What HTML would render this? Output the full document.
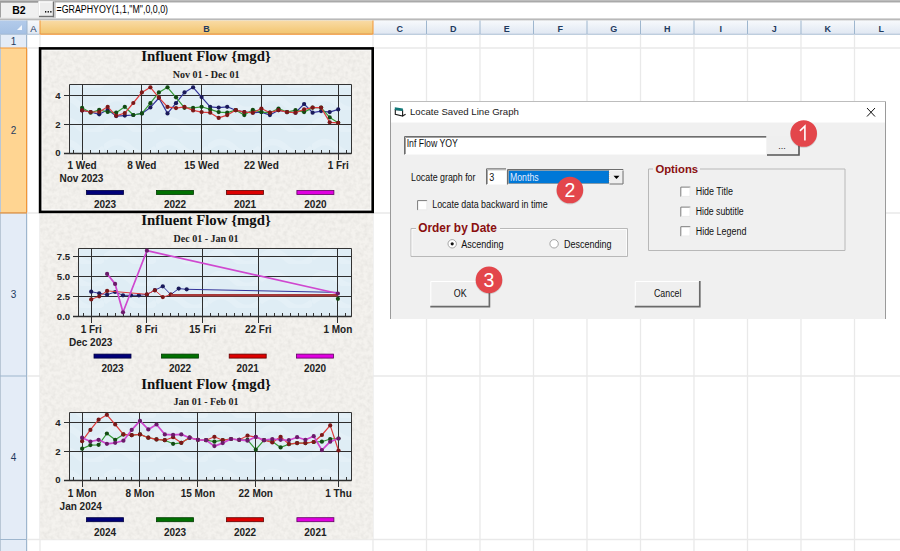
<!DOCTYPE html><html><head><meta charset="utf-8"><style>html,body{margin:0;padding:0;background:#fff;overflow:hidden}svg{display:block}</style></head><body>
<svg width="900" height="551" viewBox="0 0 900 551">
<defs>
<linearGradient id="hdr" x1="0" y1="0" x2="0" y2="1"><stop offset="0" stop-color="#f7f9fc"/><stop offset="1" stop-color="#dfe7f2"/></linearGradient>
<linearGradient id="hdrsel" x1="0" y1="0" x2="0" y2="1"><stop offset="0" stop-color="#f9dba6"/><stop offset="1" stop-color="#f2c46c"/></linearGradient>
<linearGradient id="corner" x1="0" y1="0" x2="0" y2="1"><stop offset="0" stop-color="#b3cbea"/><stop offset="1" stop-color="#a4c0e4"/></linearGradient>
<filter id="paper" x="0" y="0" width="100%" height="100%"><feTurbulence type="fractalNoise" baseFrequency="0.25" numOctaves="2" seed="3" result="n"/><feColorMatrix type="matrix" values="0 0 0 0 0.45  0 0 0 0 0.44  0 0 0 0 0.42  0 0 0 -1.6 1.05"/><feComposite in2="SourceGraphic" operator="in"/></filter>
<pattern id="wave" x="0" y="0" width="52" height="22" patternUnits="userSpaceOnUse"><path d="M0 16 Q13 4 26 16 T52 16" fill="none" stroke="#ffffff" stroke-width="6" opacity="0.16"/></pattern>
</defs>
<rect x="0" y="0" width="900" height="20.5" fill="#e9e9e9"/>
<rect x="0" y="0" width="900" height="1.5" fill="#bdbdbd"/>
<rect x="0" y="1.5" width="38" height="16" fill="#f0f0f0"/>
<rect x="0" y="1.2" width="38" height="1.4" fill="#8a8a8a"/>
<rect x="0" y="1.5" width="1" height="16" fill="#a0a0a0"/>
<text x="19" y="13.5" font-family='"Liberation Sans", sans-serif' font-size="10.5" font-weight="bold" text-anchor="middle" fill="#000">B2</text>
<rect x="39" y="1.5" width="15" height="15.5" fill="#ededed"/>
<rect x="39" y="1.5" width="14" height="1" fill="#fff"/>
<rect x="39" y="1.5" width="1" height="15" fill="#fff"/>
<rect x="39" y="15.8" width="15" height="1.4" fill="#6f6f6f"/>
<rect x="52.8" y="1.5" width="1.4" height="15.7" fill="#6f6f6f"/>
<rect x="45" y="11" width="1.3" height="1.6" fill="#111"/><rect x="47.6" y="11" width="1.3" height="1.6" fill="#111"/><rect x="50.2" y="11" width="1.3" height="1.6" fill="#111"/>
<rect x="54.5" y="1.5" width="846" height="16.5" fill="#fff"/>
<rect x="54.5" y="1.2" width="846" height="1.2" fill="#9a9a9a"/>
<rect x="54.5" y="1.5" width="1" height="16.5" fill="#a9a9a9"/>
<text x="56.5" y="12.6" font-family='"Liberation Sans", sans-serif' font-size="10" textLength="111.5" lengthAdjust="spacingAndGlyphs" fill="#000">=GRAPHYOY(1,1,"M",0,0,0)</text>
<rect x="0" y="18" width="900" height="1.3" fill="#d6d6d6"/>
<rect x="0" y="19.3" width="900" height="1.2" fill="#a7a7a7"/>
<rect x="0" y="20.5" width="900" height="14" fill="url(#hdr)"/>
<rect x="0" y="20.5" width="27" height="14" fill="url(#corner)"/>
<path d="M22 30 L22 25 L17 30 Z" fill="#f4f7fb"/>
<rect x="40" y="20.5" width="333" height="14" fill="url(#hdrsel)"/>
<rect x="0" y="33.8" width="900" height="1" fill="#9eb6ce"/>
<rect x="40" y="33.6" width="333" height="1.4" fill="#f29536"/>
<rect x="26.5" y="20.5" width="1" height="14" fill="#9eb6ce"/>
<rect x="39.5" y="20.5" width="1" height="14" fill="#f29536"/>
<rect x="372.5" y="20.5" width="1" height="14" fill="#f29536"/>
<rect x="426.0" y="20.5" width="1" height="14" fill="#9eb6ce"/>
<rect x="479.5" y="20.5" width="1" height="14" fill="#9eb6ce"/>
<rect x="533.0" y="20.5" width="1" height="14" fill="#9eb6ce"/>
<rect x="586.5" y="20.5" width="1" height="14" fill="#9eb6ce"/>
<rect x="640.0" y="20.5" width="1" height="14" fill="#9eb6ce"/>
<rect x="693.5" y="20.5" width="1" height="14" fill="#9eb6ce"/>
<rect x="747.0" y="20.5" width="1" height="14" fill="#9eb6ce"/>
<rect x="800.5" y="20.5" width="1" height="14" fill="#9eb6ce"/>
<rect x="854.0" y="20.5" width="1" height="14" fill="#9eb6ce"/>
<text x="33.5" y="31.6" font-family='"Liberation Sans", sans-serif' font-size="9.6" font-weight="normal" text-anchor="middle" fill="#1f3a5f">A</text>
<text x="206.5" y="31.6" font-family='"Liberation Sans", sans-serif' font-size="9" font-weight="bold" text-anchor="middle" fill="#1f3a5f">B</text>
<text x="399.75" y="31.6" font-family='"Liberation Sans", sans-serif' font-size="9" font-weight="bold" text-anchor="middle" fill="#1f3a5f">C</text>
<text x="453.25" y="31.6" font-family='"Liberation Sans", sans-serif' font-size="9" font-weight="bold" text-anchor="middle" fill="#1f3a5f">D</text>
<text x="506.75" y="31.6" font-family='"Liberation Sans", sans-serif' font-size="9" font-weight="bold" text-anchor="middle" fill="#1f3a5f">E</text>
<text x="560.25" y="31.6" font-family='"Liberation Sans", sans-serif' font-size="9" font-weight="bold" text-anchor="middle" fill="#1f3a5f">F</text>
<text x="613.75" y="31.6" font-family='"Liberation Sans", sans-serif' font-size="9" font-weight="bold" text-anchor="middle" fill="#1f3a5f">G</text>
<text x="667.25" y="31.6" font-family='"Liberation Sans", sans-serif' font-size="9" font-weight="bold" text-anchor="middle" fill="#1f3a5f">H</text>
<text x="720.75" y="31.6" font-family='"Liberation Sans", sans-serif' font-size="9" font-weight="bold" text-anchor="middle" fill="#1f3a5f">I</text>
<text x="774.25" y="31.6" font-family='"Liberation Sans", sans-serif' font-size="9" font-weight="bold" text-anchor="middle" fill="#1f3a5f">J</text>
<text x="827.75" y="31.6" font-family='"Liberation Sans", sans-serif' font-size="9" font-weight="bold" text-anchor="middle" fill="#1f3a5f">K</text>
<text x="881.25" y="31.6" font-family='"Liberation Sans", sans-serif' font-size="9" font-weight="bold" text-anchor="middle" fill="#1f3a5f">L</text>
<rect x="27" y="34.8" width="873" height="520" fill="#fff"/>
<rect x="0" y="34.8" width="27" height="520" fill="#e4ecf7"/>
<rect x="0" y="48" width="27" height="165" fill="#ffd592"/>
<rect x="26" y="34.8" width="1.2" height="520" fill="#9eb6ce"/>
<rect x="26" y="48" width="1.2" height="165" fill="#f29536"/>
<rect x="0" y="34.8" width="1" height="520" fill="#b9c7d6"/>
<rect x="0" y="47.5" width="27" height="1" fill="#f29536"/>
<rect x="0" y="212.5" width="27" height="1" fill="#9eb6ce"/>
<rect x="0" y="375.5" width="27" height="1" fill="#9eb6ce"/>
<rect x="0" y="539.0" width="27" height="1" fill="#9eb6ce"/>
<rect x="0" y="212.3" width="27" height="1.2" fill="#f29536"/>
<text x="13.5" y="45.0" font-family='"Liberation Sans", sans-serif' font-size="10" text-anchor="middle" fill="#1f3a5f">1</text>
<text x="13.5" y="134.1" font-family='"Liberation Sans", sans-serif' font-size="10" text-anchor="middle" fill="#1f3a5f">2</text>
<text x="13.5" y="298.1" font-family='"Liberation Sans", sans-serif' font-size="10" text-anchor="middle" fill="#1f3a5f">3</text>
<text x="13.5" y="461.35" font-family='"Liberation Sans", sans-serif' font-size="10" text-anchor="middle" fill="#1f3a5f">4</text>
<line x1="373" y1="34.8" x2="373" y2="551" stroke="#e9e9e9" stroke-width="1.3"/>
<line x1="426.5" y1="34.8" x2="426.5" y2="551" stroke="#e9e9e9" stroke-width="1.3"/>
<line x1="480" y1="34.8" x2="480" y2="551" stroke="#e9e9e9" stroke-width="1.3"/>
<line x1="533.5" y1="34.8" x2="533.5" y2="551" stroke="#e9e9e9" stroke-width="1.3"/>
<line x1="587" y1="34.8" x2="587" y2="551" stroke="#e9e9e9" stroke-width="1.3"/>
<line x1="640.5" y1="34.8" x2="640.5" y2="551" stroke="#e9e9e9" stroke-width="1.3"/>
<line x1="694" y1="34.8" x2="694" y2="551" stroke="#e9e9e9" stroke-width="1.3"/>
<line x1="747.5" y1="34.8" x2="747.5" y2="551" stroke="#e9e9e9" stroke-width="1.3"/>
<line x1="801" y1="34.8" x2="801" y2="551" stroke="#e9e9e9" stroke-width="1.3"/>
<line x1="854.5" y1="34.8" x2="854.5" y2="551" stroke="#e9e9e9" stroke-width="1.3"/>
<line x1="40" y1="34.8" x2="40" y2="551" stroke="#e9e9e9" stroke-width="1.3"/>
<line x1="27" y1="48" x2="900" y2="48" stroke="#e9e9e9" stroke-width="1.3"/>
<line x1="27" y1="213" x2="900" y2="213" stroke="#e9e9e9" stroke-width="1.3"/>
<line x1="27" y1="376" x2="900" y2="376" stroke="#e9e9e9" stroke-width="1.3"/>
<line x1="27" y1="539.5" x2="900" y2="539.5" stroke="#e9e9e9" stroke-width="1.3"/>
<rect x="40" y="48" width="333" height="165" fill="#f4f2ee"/>
<rect x="40" y="48" width="333" height="165" fill="#fff" filter="url(#paper)" opacity="0.22"/>
<text x="206.1" y="61.4" font-family='"Liberation Serif", serif' font-size="14.8" font-weight="bold" text-anchor="middle" textLength="129.5" lengthAdjust="spacing" fill="#111">Influent Flow {mgd}</text>
<text x="206.1" y="77.9" font-family='"Liberation Serif", serif' font-size="10" font-weight="bold" text-anchor="middle" fill="#222">Nov 01 - Dec 01</text>
<rect x="69.5" y="84.5" width="282.0" height="69.0" fill="#dfedf5"/>
<rect x="69.5" y="84.5" width="282.0" height="69.0" fill="url(#wave)"/>
<path d="M69.5 153.5 L69.5 84.5 L351.5 84.5 L351.5 153.5" fill="none" stroke="#333" stroke-width="1"/>
<line x1="64.0" y1="153.5" x2="351.5" y2="153.5" stroke="#2e2e2e" stroke-width="1"/>
<text x="60.699999999999996" y="156.4" font-family='"Liberation Sans", sans-serif' font-size="9.6" font-weight="bold" text-anchor="end" fill="#222">0</text>
<line x1="64.0" y1="124.5" x2="351.5" y2="124.5" stroke="#2e2e2e" stroke-width="1"/>
<text x="60.699999999999996" y="127.60000000000001" font-family='"Liberation Sans", sans-serif' font-size="9.6" font-weight="bold" text-anchor="end" fill="#222">2</text>
<line x1="64.0" y1="95.5" x2="351.5" y2="95.5" stroke="#2e2e2e" stroke-width="1"/>
<text x="60.699999999999996" y="98.80000000000001" font-family='"Liberation Sans", sans-serif' font-size="9.6" font-weight="bold" text-anchor="end" fill="#222">4</text>
<line x1="73.5" y1="150.0" x2="73.5" y2="153.5" stroke="#333" stroke-width="1"/>
<line x1="82.5" y1="150.0" x2="82.5" y2="153.5" stroke="#333" stroke-width="1"/>
<line x1="90.5" y1="150.0" x2="90.5" y2="153.5" stroke="#333" stroke-width="1"/>
<line x1="99.5" y1="150.0" x2="99.5" y2="153.5" stroke="#333" stroke-width="1"/>
<line x1="107.5" y1="150.0" x2="107.5" y2="153.5" stroke="#333" stroke-width="1"/>
<line x1="116.5" y1="150.0" x2="116.5" y2="153.5" stroke="#333" stroke-width="1"/>
<line x1="124.5" y1="150.0" x2="124.5" y2="153.5" stroke="#333" stroke-width="1"/>
<line x1="133.5" y1="150.0" x2="133.5" y2="153.5" stroke="#333" stroke-width="1"/>
<line x1="141.5" y1="150.0" x2="141.5" y2="153.5" stroke="#333" stroke-width="1"/>
<line x1="150.5" y1="150.0" x2="150.5" y2="153.5" stroke="#333" stroke-width="1"/>
<line x1="158.5" y1="150.0" x2="158.5" y2="153.5" stroke="#333" stroke-width="1"/>
<line x1="167.5" y1="150.0" x2="167.5" y2="153.5" stroke="#333" stroke-width="1"/>
<line x1="176.5" y1="150.0" x2="176.5" y2="153.5" stroke="#333" stroke-width="1"/>
<line x1="184.5" y1="150.0" x2="184.5" y2="153.5" stroke="#333" stroke-width="1"/>
<line x1="193.5" y1="150.0" x2="193.5" y2="153.5" stroke="#333" stroke-width="1"/>
<line x1="201.5" y1="150.0" x2="201.5" y2="153.5" stroke="#333" stroke-width="1"/>
<line x1="210.5" y1="150.0" x2="210.5" y2="153.5" stroke="#333" stroke-width="1"/>
<line x1="218.5" y1="150.0" x2="218.5" y2="153.5" stroke="#333" stroke-width="1"/>
<line x1="227.5" y1="150.0" x2="227.5" y2="153.5" stroke="#333" stroke-width="1"/>
<line x1="235.5" y1="150.0" x2="235.5" y2="153.5" stroke="#333" stroke-width="1"/>
<line x1="244.5" y1="150.0" x2="244.5" y2="153.5" stroke="#333" stroke-width="1"/>
<line x1="252.5" y1="150.0" x2="252.5" y2="153.5" stroke="#333" stroke-width="1"/>
<line x1="261.5" y1="150.0" x2="261.5" y2="153.5" stroke="#333" stroke-width="1"/>
<line x1="269.5" y1="150.0" x2="269.5" y2="153.5" stroke="#333" stroke-width="1"/>
<line x1="278.5" y1="150.0" x2="278.5" y2="153.5" stroke="#333" stroke-width="1"/>
<line x1="286.5" y1="150.0" x2="286.5" y2="153.5" stroke="#333" stroke-width="1"/>
<line x1="295.5" y1="150.0" x2="295.5" y2="153.5" stroke="#333" stroke-width="1"/>
<line x1="304.5" y1="150.0" x2="304.5" y2="153.5" stroke="#333" stroke-width="1"/>
<line x1="312.5" y1="150.0" x2="312.5" y2="153.5" stroke="#333" stroke-width="1"/>
<line x1="321.5" y1="150.0" x2="321.5" y2="153.5" stroke="#333" stroke-width="1"/>
<line x1="329.5" y1="150.0" x2="329.5" y2="153.5" stroke="#333" stroke-width="1"/>
<line x1="338.5" y1="150.0" x2="338.5" y2="153.5" stroke="#333" stroke-width="1"/>
<line x1="346.5" y1="150.0" x2="346.5" y2="153.5" stroke="#333" stroke-width="1"/>
<line x1="82.5" y1="84.5" x2="82.5" y2="160.0" stroke="#2e2e2e" stroke-width="1"/>
<text x="82.1" y="168.9" font-family='"Liberation Sans", sans-serif' font-size="10" font-weight="bold" text-anchor="middle" fill="#222">1 Wed</text>
<line x1="141.5" y1="84.5" x2="141.5" y2="160.0" stroke="#2e2e2e" stroke-width="1"/>
<text x="141.859" y="168.9" font-family='"Liberation Sans", sans-serif' font-size="10" font-weight="bold" text-anchor="middle" fill="#222">8 Wed</text>
<line x1="201.5" y1="84.5" x2="201.5" y2="160.0" stroke="#2e2e2e" stroke-width="1"/>
<text x="201.618" y="168.9" font-family='"Liberation Sans", sans-serif' font-size="10" font-weight="bold" text-anchor="middle" fill="#222">15 Wed</text>
<line x1="261.5" y1="84.5" x2="261.5" y2="160.0" stroke="#2e2e2e" stroke-width="1"/>
<text x="261.377" y="168.9" font-family='"Liberation Sans", sans-serif' font-size="10" font-weight="bold" text-anchor="middle" fill="#222">22 Wed</text>
<line x1="338.5" y1="84.5" x2="338.5" y2="160.0" stroke="#2e2e2e" stroke-width="1"/>
<text x="338.21000000000004" y="168.9" font-family='"Liberation Sans", sans-serif' font-size="10" font-weight="bold" text-anchor="middle" fill="#222">1 Fri</text>
<text x="59.5" y="182" font-family='"Liberation Sans", sans-serif' font-size="10" font-weight="bold" fill="#222">Nov 2023</text>
<polyline points="82.1,110.4 90.6,112.0 99.2,114.3 107.7,109.8 116.2,116.1 124.8,115.6 133.3,115.0 141.9,113.4 150.4,107.4 158.9,98.0 167.5,113.4 176.0,103.2 184.5,92.4 193.1,87.3 201.6,97.1 210.2,106.8 218.7,107.6 227.2,106.8 235.8,110.2 244.3,112.1 252.8,112.7 261.4,112.1 269.9,115.1 278.5,110.2 287.0,112.1 295.5,112.7 304.1,104.0 312.6,112.7 321.1,111.1 329.7,112.1 338.2,109.4" fill="none" stroke="#34349a" stroke-width="1.2" stroke-linejoin="round"/>
<circle cx="82.1" cy="110.4" r="2.1" fill="#1a1a5a"/>
<circle cx="90.6" cy="112.0" r="2.1" fill="#1a1a5a"/>
<circle cx="99.2" cy="114.3" r="2.1" fill="#1a1a5a"/>
<circle cx="107.7" cy="109.8" r="2.1" fill="#1a1a5a"/>
<circle cx="116.2" cy="116.1" r="2.1" fill="#1a1a5a"/>
<circle cx="124.8" cy="115.6" r="2.1" fill="#1a1a5a"/>
<circle cx="133.3" cy="115.0" r="2.1" fill="#1a1a5a"/>
<circle cx="141.9" cy="113.4" r="2.1" fill="#1a1a5a"/>
<circle cx="150.4" cy="107.4" r="2.1" fill="#1a1a5a"/>
<circle cx="158.9" cy="98.0" r="2.1" fill="#1a1a5a"/>
<circle cx="167.5" cy="113.4" r="2.1" fill="#1a1a5a"/>
<circle cx="176.0" cy="103.2" r="2.1" fill="#1a1a5a"/>
<circle cx="184.5" cy="92.4" r="2.1" fill="#1a1a5a"/>
<circle cx="193.1" cy="87.3" r="2.1" fill="#1a1a5a"/>
<circle cx="201.6" cy="97.1" r="2.1" fill="#1a1a5a"/>
<circle cx="210.2" cy="106.8" r="2.1" fill="#1a1a5a"/>
<circle cx="218.7" cy="107.6" r="2.1" fill="#1a1a5a"/>
<circle cx="227.2" cy="106.8" r="2.1" fill="#1a1a5a"/>
<circle cx="235.8" cy="110.2" r="2.1" fill="#1a1a5a"/>
<circle cx="244.3" cy="112.1" r="2.1" fill="#1a1a5a"/>
<circle cx="252.8" cy="112.7" r="2.1" fill="#1a1a5a"/>
<circle cx="261.4" cy="112.1" r="2.1" fill="#1a1a5a"/>
<circle cx="269.9" cy="115.1" r="2.1" fill="#1a1a5a"/>
<circle cx="278.5" cy="110.2" r="2.1" fill="#1a1a5a"/>
<circle cx="287.0" cy="112.1" r="2.1" fill="#1a1a5a"/>
<circle cx="295.5" cy="112.7" r="2.1" fill="#1a1a5a"/>
<circle cx="304.1" cy="104.0" r="2.1" fill="#1a1a5a"/>
<circle cx="312.6" cy="112.7" r="2.1" fill="#1a1a5a"/>
<circle cx="321.1" cy="111.1" r="2.1" fill="#1a1a5a"/>
<circle cx="329.7" cy="112.1" r="2.1" fill="#1a1a5a"/>
<circle cx="338.2" cy="109.4" r="2.1" fill="#1a1a5a"/>
<polyline points="82.1,107.8 90.6,112.7 99.2,109.9 107.7,112.0 116.2,112.7 124.8,106.8 133.3,115.0 141.9,113.4 150.4,103.2 158.9,92.4 167.5,87.3 176.0,97.3 184.5,107.8 193.1,107.8 201.6,106.8 210.2,109.4 218.7,112.1 227.2,112.7 235.8,110.2 244.3,115.1 252.8,109.8 261.4,112.1 269.9,112.7 278.5,108.5 287.0,112.1 295.5,110.2 304.1,112.1 312.6,107.6 321.1,107.6 329.7,117.4 338.2,122.8" fill="none" stroke="#349a34" stroke-width="1.2" stroke-linejoin="round"/>
<circle cx="82.1" cy="107.8" r="2.1" fill="#124a12"/>
<circle cx="90.6" cy="112.7" r="2.1" fill="#124a12"/>
<circle cx="99.2" cy="109.9" r="2.1" fill="#124a12"/>
<circle cx="107.7" cy="112.0" r="2.1" fill="#124a12"/>
<circle cx="116.2" cy="112.7" r="2.1" fill="#124a12"/>
<circle cx="124.8" cy="106.8" r="2.1" fill="#124a12"/>
<circle cx="133.3" cy="115.0" r="2.1" fill="#124a12"/>
<circle cx="141.9" cy="113.4" r="2.1" fill="#124a12"/>
<circle cx="150.4" cy="103.2" r="2.1" fill="#124a12"/>
<circle cx="158.9" cy="92.4" r="2.1" fill="#124a12"/>
<circle cx="167.5" cy="87.3" r="2.1" fill="#124a12"/>
<circle cx="176.0" cy="97.3" r="2.1" fill="#124a12"/>
<circle cx="184.5" cy="107.8" r="2.1" fill="#124a12"/>
<circle cx="193.1" cy="107.8" r="2.1" fill="#124a12"/>
<circle cx="201.6" cy="106.8" r="2.1" fill="#124a12"/>
<circle cx="210.2" cy="109.4" r="2.1" fill="#124a12"/>
<circle cx="218.7" cy="112.1" r="2.1" fill="#124a12"/>
<circle cx="227.2" cy="112.7" r="2.1" fill="#124a12"/>
<circle cx="235.8" cy="110.2" r="2.1" fill="#124a12"/>
<circle cx="244.3" cy="115.1" r="2.1" fill="#124a12"/>
<circle cx="252.8" cy="109.8" r="2.1" fill="#124a12"/>
<circle cx="261.4" cy="112.1" r="2.1" fill="#124a12"/>
<circle cx="269.9" cy="112.7" r="2.1" fill="#124a12"/>
<circle cx="278.5" cy="108.5" r="2.1" fill="#124a12"/>
<circle cx="287.0" cy="112.1" r="2.1" fill="#124a12"/>
<circle cx="295.5" cy="110.2" r="2.1" fill="#124a12"/>
<circle cx="304.1" cy="112.1" r="2.1" fill="#124a12"/>
<circle cx="312.6" cy="107.6" r="2.1" fill="#124a12"/>
<circle cx="321.1" cy="107.6" r="2.1" fill="#124a12"/>
<circle cx="329.7" cy="117.4" r="2.1" fill="#124a12"/>
<circle cx="338.2" cy="122.8" r="2.1" fill="#124a12"/>
<polyline points="82.1,110.4 90.6,112.0 99.2,112.0 107.7,106.8 116.2,115.8 124.8,113.1 133.3,103.0 141.9,92.4 150.4,87.3 158.9,97.6 167.5,106.9 176.0,108.1 184.5,106.9 193.1,110.4 201.6,112.1 210.2,112.7 218.7,117.9 227.2,115.1 235.8,110.2 244.3,112.1 252.8,112.7 261.4,108.5 269.9,112.7 278.5,110.2 287.0,112.1 295.5,112.7 304.1,109.4 312.6,107.6 321.1,107.6 329.7,122.3 338.2,122.8" fill="none" stroke="#dd3c3c" stroke-width="1.2" stroke-linejoin="round"/>
<circle cx="82.1" cy="110.4" r="2.1" fill="#7a1818"/>
<circle cx="90.6" cy="112.0" r="2.1" fill="#7a1818"/>
<circle cx="99.2" cy="112.0" r="2.1" fill="#7a1818"/>
<circle cx="107.7" cy="106.8" r="2.1" fill="#7a1818"/>
<circle cx="116.2" cy="115.8" r="2.1" fill="#7a1818"/>
<circle cx="124.8" cy="113.1" r="2.1" fill="#7a1818"/>
<circle cx="133.3" cy="103.0" r="2.1" fill="#7a1818"/>
<circle cx="141.9" cy="92.4" r="2.1" fill="#7a1818"/>
<circle cx="150.4" cy="87.3" r="2.1" fill="#7a1818"/>
<circle cx="158.9" cy="97.6" r="2.1" fill="#7a1818"/>
<circle cx="167.5" cy="106.9" r="2.1" fill="#7a1818"/>
<circle cx="176.0" cy="108.1" r="2.1" fill="#7a1818"/>
<circle cx="184.5" cy="106.9" r="2.1" fill="#7a1818"/>
<circle cx="193.1" cy="110.4" r="2.1" fill="#7a1818"/>
<circle cx="201.6" cy="112.1" r="2.1" fill="#7a1818"/>
<circle cx="210.2" cy="112.7" r="2.1" fill="#7a1818"/>
<circle cx="218.7" cy="117.9" r="2.1" fill="#7a1818"/>
<circle cx="227.2" cy="115.1" r="2.1" fill="#7a1818"/>
<circle cx="235.8" cy="110.2" r="2.1" fill="#7a1818"/>
<circle cx="244.3" cy="112.1" r="2.1" fill="#7a1818"/>
<circle cx="252.8" cy="112.7" r="2.1" fill="#7a1818"/>
<circle cx="261.4" cy="108.5" r="2.1" fill="#7a1818"/>
<circle cx="269.9" cy="112.7" r="2.1" fill="#7a1818"/>
<circle cx="278.5" cy="110.2" r="2.1" fill="#7a1818"/>
<circle cx="287.0" cy="112.1" r="2.1" fill="#7a1818"/>
<circle cx="295.5" cy="112.7" r="2.1" fill="#7a1818"/>
<circle cx="304.1" cy="109.4" r="2.1" fill="#7a1818"/>
<circle cx="312.6" cy="107.6" r="2.1" fill="#7a1818"/>
<circle cx="321.1" cy="107.6" r="2.1" fill="#7a1818"/>
<circle cx="329.7" cy="122.3" r="2.1" fill="#7a1818"/>
<circle cx="338.2" cy="122.8" r="2.1" fill="#7a1818"/>
<line x1="64.0" y1="153.5" x2="351.5" y2="153.5" stroke="#2e2e2e" stroke-width="1.3"/>
<rect x="86.5" y="190.5" width="37" height="4" fill="#000078" stroke="#000040" stroke-width="0.8"/>
<text x="105" y="208.4" font-family='"Liberation Sans", sans-serif' font-size="10" font-weight="bold" text-anchor="middle" fill="#222">2023</text>
<rect x="156.5" y="190.5" width="37" height="4" fill="#007000" stroke="#003a00" stroke-width="0.8"/>
<text x="175" y="208.4" font-family='"Liberation Sans", sans-serif' font-size="10" font-weight="bold" text-anchor="middle" fill="#222">2022</text>
<rect x="226.5" y="190.5" width="37" height="4" fill="#dd0000" stroke="#600000" stroke-width="0.8"/>
<text x="245" y="208.4" font-family='"Liberation Sans", sans-serif' font-size="10" font-weight="bold" text-anchor="middle" fill="#222">2021</text>
<rect x="296.9" y="190.5" width="37" height="4" fill="#e000e0" stroke="#600060" stroke-width="0.8"/>
<text x="315.4" y="208.4" font-family='"Liberation Sans", sans-serif' font-size="10" font-weight="bold" text-anchor="middle" fill="#222">2020</text>
<rect x="40" y="213" width="333" height="163" fill="#f4f2ee"/>
<rect x="40" y="213" width="333" height="163" fill="#fff" filter="url(#paper)" opacity="0.22"/>
<text x="206.1" y="224.6" font-family='"Liberation Serif", serif' font-size="14.8" font-weight="bold" text-anchor="middle" textLength="129.5" lengthAdjust="spacing" fill="#111">Influent Flow {mgd}</text>
<text x="206.1" y="241.6" font-family='"Liberation Serif", serif' font-size="10" font-weight="bold" text-anchor="middle" fill="#222">Dec 01 - Jan 01</text>
<rect x="78.5" y="248.5" width="273.0" height="68.0" fill="#dfedf5"/>
<rect x="78.5" y="248.5" width="273.0" height="68.0" fill="url(#wave)"/>
<path d="M78.5 316.5 L78.5 248.5 L351.5 248.5 L351.5 316.5" fill="none" stroke="#333" stroke-width="1"/>
<line x1="73.0" y1="316.5" x2="351.5" y2="316.5" stroke="#2e2e2e" stroke-width="1"/>
<text x="70.2" y="319.7" font-family='"Liberation Sans", sans-serif' font-size="9.6" font-weight="bold" text-anchor="end" fill="#222">0.0</text>
<line x1="73.0" y1="296.5" x2="351.5" y2="296.5" stroke="#2e2e2e" stroke-width="1"/>
<text x="70.2" y="299.8" font-family='"Liberation Sans", sans-serif' font-size="9.6" font-weight="bold" text-anchor="end" fill="#222">2.5</text>
<line x1="73.0" y1="276.5" x2="351.5" y2="276.5" stroke="#2e2e2e" stroke-width="1"/>
<text x="70.2" y="279.9" font-family='"Liberation Sans", sans-serif' font-size="9.6" font-weight="bold" text-anchor="end" fill="#222">5.0</text>
<line x1="73.0" y1="256.5" x2="351.5" y2="256.5" stroke="#2e2e2e" stroke-width="1"/>
<text x="70.2" y="260.0" font-family='"Liberation Sans", sans-serif' font-size="9.6" font-weight="bold" text-anchor="end" fill="#222">7.5</text>
<line x1="83.5" y1="313.0" x2="83.5" y2="316.5" stroke="#333" stroke-width="1"/>
<line x1="91.5" y1="313.0" x2="91.5" y2="316.5" stroke="#333" stroke-width="1"/>
<line x1="99.5" y1="313.0" x2="99.5" y2="316.5" stroke="#333" stroke-width="1"/>
<line x1="107.5" y1="313.0" x2="107.5" y2="316.5" stroke="#333" stroke-width="1"/>
<line x1="115.5" y1="313.0" x2="115.5" y2="316.5" stroke="#333" stroke-width="1"/>
<line x1="123.5" y1="313.0" x2="123.5" y2="316.5" stroke="#333" stroke-width="1"/>
<line x1="130.5" y1="313.0" x2="130.5" y2="316.5" stroke="#333" stroke-width="1"/>
<line x1="138.5" y1="313.0" x2="138.5" y2="316.5" stroke="#333" stroke-width="1"/>
<line x1="146.5" y1="313.0" x2="146.5" y2="316.5" stroke="#333" stroke-width="1"/>
<line x1="154.5" y1="313.0" x2="154.5" y2="316.5" stroke="#333" stroke-width="1"/>
<line x1="162.5" y1="313.0" x2="162.5" y2="316.5" stroke="#333" stroke-width="1"/>
<line x1="170.5" y1="313.0" x2="170.5" y2="316.5" stroke="#333" stroke-width="1"/>
<line x1="178.5" y1="313.0" x2="178.5" y2="316.5" stroke="#333" stroke-width="1"/>
<line x1="186.5" y1="313.0" x2="186.5" y2="316.5" stroke="#333" stroke-width="1"/>
<line x1="194.5" y1="313.0" x2="194.5" y2="316.5" stroke="#333" stroke-width="1"/>
<line x1="202.5" y1="313.0" x2="202.5" y2="316.5" stroke="#333" stroke-width="1"/>
<line x1="210.5" y1="313.0" x2="210.5" y2="316.5" stroke="#333" stroke-width="1"/>
<line x1="218.5" y1="313.0" x2="218.5" y2="316.5" stroke="#333" stroke-width="1"/>
<line x1="226.5" y1="313.0" x2="226.5" y2="316.5" stroke="#333" stroke-width="1"/>
<line x1="234.5" y1="313.0" x2="234.5" y2="316.5" stroke="#333" stroke-width="1"/>
<line x1="242.5" y1="313.0" x2="242.5" y2="316.5" stroke="#333" stroke-width="1"/>
<line x1="250.5" y1="313.0" x2="250.5" y2="316.5" stroke="#333" stroke-width="1"/>
<line x1="258.5" y1="313.0" x2="258.5" y2="316.5" stroke="#333" stroke-width="1"/>
<line x1="266.5" y1="313.0" x2="266.5" y2="316.5" stroke="#333" stroke-width="1"/>
<line x1="274.5" y1="313.0" x2="274.5" y2="316.5" stroke="#333" stroke-width="1"/>
<line x1="282.5" y1="313.0" x2="282.5" y2="316.5" stroke="#333" stroke-width="1"/>
<line x1="290.5" y1="313.0" x2="290.5" y2="316.5" stroke="#333" stroke-width="1"/>
<line x1="298.5" y1="313.0" x2="298.5" y2="316.5" stroke="#333" stroke-width="1"/>
<line x1="306.5" y1="313.0" x2="306.5" y2="316.5" stroke="#333" stroke-width="1"/>
<line x1="313.5" y1="313.0" x2="313.5" y2="316.5" stroke="#333" stroke-width="1"/>
<line x1="321.5" y1="313.0" x2="321.5" y2="316.5" stroke="#333" stroke-width="1"/>
<line x1="329.5" y1="313.0" x2="329.5" y2="316.5" stroke="#333" stroke-width="1"/>
<line x1="337.5" y1="313.0" x2="337.5" y2="316.5" stroke="#333" stroke-width="1"/>
<line x1="345.5" y1="313.0" x2="345.5" y2="316.5" stroke="#333" stroke-width="1"/>
<line x1="91.5" y1="248.5" x2="91.5" y2="323.0" stroke="#2e2e2e" stroke-width="1"/>
<text x="91.2" y="332.7" font-family='"Liberation Sans", sans-serif' font-size="10" font-weight="bold" text-anchor="middle" fill="#222">1 Fri</text>
<line x1="146.5" y1="248.5" x2="146.5" y2="323.0" stroke="#2e2e2e" stroke-width="1"/>
<text x="146.899" y="332.7" font-family='"Liberation Sans", sans-serif' font-size="10" font-weight="bold" text-anchor="middle" fill="#222">8 Fri</text>
<line x1="202.5" y1="248.5" x2="202.5" y2="323.0" stroke="#2e2e2e" stroke-width="1"/>
<text x="202.598" y="332.7" font-family='"Liberation Sans", sans-serif' font-size="10" font-weight="bold" text-anchor="middle" fill="#222">15 Fri</text>
<line x1="258.5" y1="248.5" x2="258.5" y2="323.0" stroke="#2e2e2e" stroke-width="1"/>
<text x="258.297" y="332.7" font-family='"Liberation Sans", sans-serif' font-size="10" font-weight="bold" text-anchor="middle" fill="#222">22 Fri</text>
<line x1="337.5" y1="248.5" x2="337.5" y2="323.0" stroke="#2e2e2e" stroke-width="1"/>
<text x="337.867" y="332.7" font-family='"Liberation Sans", sans-serif' font-size="10" font-weight="bold" text-anchor="middle" fill="#222">1 Mon</text>
<text x="69" y="345.6" font-family='"Liberation Sans", sans-serif' font-size="10" font-weight="bold" fill="#222">Dec 2023</text>
<polyline points="91.2,291.7 99.2,293.3 107.1,294.7 115.1,292.0 123.0,295.3 131.0,295.3 138.9,295.3 146.9,294.5 154.9,290.2 162.8,286.3 170.8,294.6 178.7,288.6 186.7,289.3 337.9,292.4" fill="none" stroke="#34349a" stroke-width="1" stroke-linejoin="round"/>
<circle cx="91.2" cy="291.7" r="2.1" fill="#1a1a5a"/>
<circle cx="99.2" cy="293.3" r="2.1" fill="#1a1a5a"/>
<circle cx="107.1" cy="294.7" r="2.1" fill="#1a1a5a"/>
<circle cx="115.1" cy="292.0" r="2.1" fill="#1a1a5a"/>
<circle cx="123.0" cy="295.3" r="2.1" fill="#1a1a5a"/>
<circle cx="131.0" cy="295.3" r="2.1" fill="#1a1a5a"/>
<circle cx="138.9" cy="295.3" r="2.1" fill="#1a1a5a"/>
<circle cx="146.9" cy="294.5" r="2.1" fill="#1a1a5a"/>
<circle cx="154.9" cy="290.2" r="2.1" fill="#1a1a5a"/>
<circle cx="162.8" cy="286.3" r="2.1" fill="#1a1a5a"/>
<circle cx="170.8" cy="294.6" r="2.1" fill="#1a1a5a"/>
<circle cx="178.7" cy="288.6" r="2.1" fill="#1a1a5a"/>
<circle cx="186.7" cy="289.3" r="2.1" fill="#1a1a5a"/>
<polyline points="337.9,298.8" fill="none" stroke="#349a34" stroke-width="1" stroke-linejoin="round"/>
<circle cx="337.9" cy="298.8" r="2.1" fill="#124a12"/>
<polyline points="91.2,299.4 99.2,296.3 107.1,290.9 146.9,294.3 154.9,290.3 162.8,297.1 170.8,294.6 337.9,295.2" fill="none" stroke="#dd3c3c" stroke-width="1" stroke-linejoin="round"/>
<circle cx="91.2" cy="299.4" r="2.1" fill="#7a1818"/>
<circle cx="99.2" cy="296.3" r="2.1" fill="#7a1818"/>
<circle cx="107.1" cy="290.9" r="2.1" fill="#7a1818"/>
<circle cx="146.9" cy="294.3" r="2.1" fill="#7a1818"/>
<circle cx="154.9" cy="290.3" r="2.1" fill="#7a1818"/>
<circle cx="162.8" cy="297.1" r="2.1" fill="#7a1818"/>
<circle cx="170.8" cy="294.6" r="2.1" fill="#7a1818"/>
<polyline points="170.8,295.2 337.9,295.2" fill="none" stroke="#a83a3a" stroke-width="2.4" stroke-linejoin="round"/>
<polyline points="107.1,273.9 115.1,283.9 123.0,312.3 146.9,250.7 337.9,293.5" fill="none" stroke="#cf48cf" stroke-width="1.7" stroke-linejoin="round"/>
<circle cx="107.1" cy="273.9" r="2.1" fill="#6a1a6a"/>
<circle cx="115.1" cy="283.9" r="2.1" fill="#6a1a6a"/>
<circle cx="123.0" cy="312.3" r="2.1" fill="#6a1a6a"/>
<circle cx="146.9" cy="250.7" r="2.1" fill="#6a1a6a"/>
<circle cx="337.9" cy="293.5" r="2.1" fill="#6a1a6a"/>
<line x1="73.0" y1="316.5" x2="351.5" y2="316.5" stroke="#2e2e2e" stroke-width="1.3"/>
<rect x="94.0" y="354.1" width="37" height="4" fill="#000078" stroke="#000040" stroke-width="0.8"/>
<text x="112.5" y="372.1" font-family='"Liberation Sans", sans-serif' font-size="10" font-weight="bold" text-anchor="middle" fill="#222">2023</text>
<rect x="161.5" y="354.1" width="37" height="4" fill="#007000" stroke="#003a00" stroke-width="0.8"/>
<text x="180" y="372.1" font-family='"Liberation Sans", sans-serif' font-size="10" font-weight="bold" text-anchor="middle" fill="#222">2022</text>
<rect x="229.2" y="354.1" width="37" height="4" fill="#dd0000" stroke="#600000" stroke-width="0.8"/>
<text x="247.7" y="372.1" font-family='"Liberation Sans", sans-serif' font-size="10" font-weight="bold" text-anchor="middle" fill="#222">2021</text>
<rect x="296.5" y="354.1" width="37" height="4" fill="#e000e0" stroke="#600060" stroke-width="0.8"/>
<text x="315" y="372.1" font-family='"Liberation Sans", sans-serif' font-size="10" font-weight="bold" text-anchor="middle" fill="#222">2020</text>
<rect x="40" y="376" width="333" height="163.5" fill="#f4f2ee"/>
<rect x="40" y="376" width="333" height="163.5" fill="#fff" filter="url(#paper)" opacity="0.22"/>
<text x="206.1" y="388.9" font-family='"Liberation Serif", serif' font-size="14.8" font-weight="bold" text-anchor="middle" textLength="129.5" lengthAdjust="spacing" fill="#111">Influent Flow {mgd}</text>
<text x="206.1" y="404.9" font-family='"Liberation Serif", serif' font-size="10" font-weight="bold" text-anchor="middle" fill="#222">Jan 01 - Feb 01</text>
<rect x="69.5" y="412.5" width="282.0" height="68.0" fill="#dfedf5"/>
<rect x="69.5" y="412.5" width="282.0" height="68.0" fill="url(#wave)"/>
<path d="M69.5 480.5 L69.5 412.5 L351.5 412.5 L351.5 480.5" fill="none" stroke="#333" stroke-width="1"/>
<line x1="64.0" y1="480.5" x2="351.5" y2="480.5" stroke="#2e2e2e" stroke-width="1"/>
<text x="60.699999999999996" y="483.4" font-family='"Liberation Sans", sans-serif' font-size="9.6" font-weight="bold" text-anchor="end" fill="#222">0</text>
<line x1="64.0" y1="451.5" x2="351.5" y2="451.5" stroke="#2e2e2e" stroke-width="1"/>
<text x="60.699999999999996" y="454.79999999999995" font-family='"Liberation Sans", sans-serif' font-size="9.6" font-weight="bold" text-anchor="end" fill="#222">2</text>
<line x1="64.0" y1="422.5" x2="351.5" y2="422.5" stroke="#2e2e2e" stroke-width="1"/>
<text x="60.699999999999996" y="426.2" font-family='"Liberation Sans", sans-serif' font-size="9.6" font-weight="bold" text-anchor="end" fill="#222">4</text>
<line x1="73.5" y1="477.0" x2="73.5" y2="480.5" stroke="#333" stroke-width="1"/>
<line x1="82.5" y1="477.0" x2="82.5" y2="480.5" stroke="#333" stroke-width="1"/>
<line x1="90.5" y1="477.0" x2="90.5" y2="480.5" stroke="#333" stroke-width="1"/>
<line x1="98.5" y1="477.0" x2="98.5" y2="480.5" stroke="#333" stroke-width="1"/>
<line x1="106.5" y1="477.0" x2="106.5" y2="480.5" stroke="#333" stroke-width="1"/>
<line x1="115.5" y1="477.0" x2="115.5" y2="480.5" stroke="#333" stroke-width="1"/>
<line x1="123.5" y1="477.0" x2="123.5" y2="480.5" stroke="#333" stroke-width="1"/>
<line x1="131.5" y1="477.0" x2="131.5" y2="480.5" stroke="#333" stroke-width="1"/>
<line x1="139.5" y1="477.0" x2="139.5" y2="480.5" stroke="#333" stroke-width="1"/>
<line x1="148.5" y1="477.0" x2="148.5" y2="480.5" stroke="#333" stroke-width="1"/>
<line x1="156.5" y1="477.0" x2="156.5" y2="480.5" stroke="#333" stroke-width="1"/>
<line x1="164.5" y1="477.0" x2="164.5" y2="480.5" stroke="#333" stroke-width="1"/>
<line x1="173.5" y1="477.0" x2="173.5" y2="480.5" stroke="#333" stroke-width="1"/>
<line x1="181.5" y1="477.0" x2="181.5" y2="480.5" stroke="#333" stroke-width="1"/>
<line x1="189.5" y1="477.0" x2="189.5" y2="480.5" stroke="#333" stroke-width="1"/>
<line x1="197.5" y1="477.0" x2="197.5" y2="480.5" stroke="#333" stroke-width="1"/>
<line x1="206.5" y1="477.0" x2="206.5" y2="480.5" stroke="#333" stroke-width="1"/>
<line x1="214.5" y1="477.0" x2="214.5" y2="480.5" stroke="#333" stroke-width="1"/>
<line x1="222.5" y1="477.0" x2="222.5" y2="480.5" stroke="#333" stroke-width="1"/>
<line x1="230.5" y1="477.0" x2="230.5" y2="480.5" stroke="#333" stroke-width="1"/>
<line x1="239.5" y1="477.0" x2="239.5" y2="480.5" stroke="#333" stroke-width="1"/>
<line x1="247.5" y1="477.0" x2="247.5" y2="480.5" stroke="#333" stroke-width="1"/>
<line x1="255.5" y1="477.0" x2="255.5" y2="480.5" stroke="#333" stroke-width="1"/>
<line x1="264.5" y1="477.0" x2="264.5" y2="480.5" stroke="#333" stroke-width="1"/>
<line x1="272.5" y1="477.0" x2="272.5" y2="480.5" stroke="#333" stroke-width="1"/>
<line x1="280.5" y1="477.0" x2="280.5" y2="480.5" stroke="#333" stroke-width="1"/>
<line x1="288.5" y1="477.0" x2="288.5" y2="480.5" stroke="#333" stroke-width="1"/>
<line x1="297.5" y1="477.0" x2="297.5" y2="480.5" stroke="#333" stroke-width="1"/>
<line x1="305.5" y1="477.0" x2="305.5" y2="480.5" stroke="#333" stroke-width="1"/>
<line x1="313.5" y1="477.0" x2="313.5" y2="480.5" stroke="#333" stroke-width="1"/>
<line x1="321.5" y1="477.0" x2="321.5" y2="480.5" stroke="#333" stroke-width="1"/>
<line x1="330.5" y1="477.0" x2="330.5" y2="480.5" stroke="#333" stroke-width="1"/>
<line x1="338.5" y1="477.0" x2="338.5" y2="480.5" stroke="#333" stroke-width="1"/>
<line x1="346.5" y1="477.0" x2="346.5" y2="480.5" stroke="#333" stroke-width="1"/>
<line x1="82.5" y1="412.5" x2="82.5" y2="487.0" stroke="#2e2e2e" stroke-width="1"/>
<text x="82.1" y="496.6" font-family='"Liberation Sans", sans-serif' font-size="10" font-weight="bold" text-anchor="middle" fill="#222">1 Mon</text>
<line x1="139.5" y1="412.5" x2="139.5" y2="487.0" stroke="#2e2e2e" stroke-width="1"/>
<text x="139.99" y="496.6" font-family='"Liberation Sans", sans-serif' font-size="10" font-weight="bold" text-anchor="middle" fill="#222">8 Mon</text>
<line x1="197.5" y1="412.5" x2="197.5" y2="487.0" stroke="#2e2e2e" stroke-width="1"/>
<text x="197.88" y="496.6" font-family='"Liberation Sans", sans-serif' font-size="10" font-weight="bold" text-anchor="middle" fill="#222">15 Mon</text>
<line x1="255.5" y1="412.5" x2="255.5" y2="487.0" stroke="#2e2e2e" stroke-width="1"/>
<text x="255.76999999999998" y="496.6" font-family='"Liberation Sans", sans-serif' font-size="10" font-weight="bold" text-anchor="middle" fill="#222">22 Mon</text>
<line x1="338.5" y1="412.5" x2="338.5" y2="487.0" stroke="#2e2e2e" stroke-width="1"/>
<text x="338.47" y="496.6" font-family='"Liberation Sans", sans-serif' font-size="10" font-weight="bold" text-anchor="middle" fill="#222">1 Thu</text>
<text x="59.6" y="509.9" font-family='"Liberation Sans", sans-serif' font-size="10" font-weight="bold" fill="#222">Jan 2024</text>
<polyline points="82.1,448.7 90.4,445.1 98.6,444.8 106.9,433.5 115.2,439.8 123.4,434.4 131.7,435.2 140.0,434.4 148.3,437.7 156.5,439.4 164.8,440.2 173.1,443.8 181.3,442.8 189.6,437.7 197.9,439.8 206.1,440.2 214.4,441.7 222.7,440.2 231.0,439.0 239.2,439.8 247.5,439.8 255.8,449.7 264.0,440.2 272.3,441.4 280.6,447.4 288.9,444.2 297.1,443.1 305.4,443.1 313.7,442.0 321.9,441.7 330.2,439.0 338.5,438.5" fill="none" stroke="#349a34" stroke-width="1.2" stroke-linejoin="round"/>
<circle cx="82.1" cy="448.7" r="2.1" fill="#124a12"/>
<circle cx="90.4" cy="445.1" r="2.1" fill="#124a12"/>
<circle cx="98.6" cy="444.8" r="2.1" fill="#124a12"/>
<circle cx="106.9" cy="433.5" r="2.1" fill="#124a12"/>
<circle cx="115.2" cy="439.8" r="2.1" fill="#124a12"/>
<circle cx="123.4" cy="434.4" r="2.1" fill="#124a12"/>
<circle cx="131.7" cy="435.2" r="2.1" fill="#124a12"/>
<circle cx="140.0" cy="434.4" r="2.1" fill="#124a12"/>
<circle cx="148.3" cy="437.7" r="2.1" fill="#124a12"/>
<circle cx="156.5" cy="439.4" r="2.1" fill="#124a12"/>
<circle cx="164.8" cy="440.2" r="2.1" fill="#124a12"/>
<circle cx="173.1" cy="443.8" r="2.1" fill="#124a12"/>
<circle cx="181.3" cy="442.8" r="2.1" fill="#124a12"/>
<circle cx="189.6" cy="437.7" r="2.1" fill="#124a12"/>
<circle cx="197.9" cy="439.8" r="2.1" fill="#124a12"/>
<circle cx="206.1" cy="440.2" r="2.1" fill="#124a12"/>
<circle cx="214.4" cy="441.7" r="2.1" fill="#124a12"/>
<circle cx="222.7" cy="440.2" r="2.1" fill="#124a12"/>
<circle cx="231.0" cy="439.0" r="2.1" fill="#124a12"/>
<circle cx="239.2" cy="439.8" r="2.1" fill="#124a12"/>
<circle cx="247.5" cy="439.8" r="2.1" fill="#124a12"/>
<circle cx="255.8" cy="449.7" r="2.1" fill="#124a12"/>
<circle cx="264.0" cy="440.2" r="2.1" fill="#124a12"/>
<circle cx="272.3" cy="441.4" r="2.1" fill="#124a12"/>
<circle cx="280.6" cy="447.4" r="2.1" fill="#124a12"/>
<circle cx="288.9" cy="444.2" r="2.1" fill="#124a12"/>
<circle cx="297.1" cy="443.1" r="2.1" fill="#124a12"/>
<circle cx="305.4" cy="443.1" r="2.1" fill="#124a12"/>
<circle cx="313.7" cy="442.0" r="2.1" fill="#124a12"/>
<circle cx="321.9" cy="441.7" r="2.1" fill="#124a12"/>
<circle cx="330.2" cy="439.0" r="2.1" fill="#124a12"/>
<circle cx="338.5" cy="438.5" r="2.1" fill="#124a12"/>
<polyline points="82.1,441.2 90.4,429.9 98.6,419.7 106.9,414.8 115.2,424.5 123.4,434.4 131.7,435.2 140.0,434.4 148.3,437.7 156.5,439.4 164.8,440.2 173.1,437.2 181.3,442.8 189.6,437.7 197.9,439.8 206.1,440.2 214.4,436.8 222.7,440.2 231.0,439.0 239.2,439.8 247.5,435.7 255.8,437.1 264.0,440.2 272.3,442.5 280.6,436.8 288.9,444.1 297.1,443.1 305.4,443.1 313.7,442.0 321.9,435.0 330.2,425.4 338.5,450.5" fill="none" stroke="#dd3c3c" stroke-width="1.2" stroke-linejoin="round"/>
<circle cx="82.1" cy="441.2" r="2.1" fill="#7a1818"/>
<circle cx="90.4" cy="429.9" r="2.1" fill="#7a1818"/>
<circle cx="98.6" cy="419.7" r="2.1" fill="#7a1818"/>
<circle cx="106.9" cy="414.8" r="2.1" fill="#7a1818"/>
<circle cx="115.2" cy="424.5" r="2.1" fill="#7a1818"/>
<circle cx="123.4" cy="434.4" r="2.1" fill="#7a1818"/>
<circle cx="131.7" cy="435.2" r="2.1" fill="#7a1818"/>
<circle cx="140.0" cy="434.4" r="2.1" fill="#7a1818"/>
<circle cx="148.3" cy="437.7" r="2.1" fill="#7a1818"/>
<circle cx="156.5" cy="439.4" r="2.1" fill="#7a1818"/>
<circle cx="164.8" cy="440.2" r="2.1" fill="#7a1818"/>
<circle cx="173.1" cy="437.2" r="2.1" fill="#7a1818"/>
<circle cx="181.3" cy="442.8" r="2.1" fill="#7a1818"/>
<circle cx="189.6" cy="437.7" r="2.1" fill="#7a1818"/>
<circle cx="197.9" cy="439.8" r="2.1" fill="#7a1818"/>
<circle cx="206.1" cy="440.2" r="2.1" fill="#7a1818"/>
<circle cx="214.4" cy="436.8" r="2.1" fill="#7a1818"/>
<circle cx="222.7" cy="440.2" r="2.1" fill="#7a1818"/>
<circle cx="231.0" cy="439.0" r="2.1" fill="#7a1818"/>
<circle cx="239.2" cy="439.8" r="2.1" fill="#7a1818"/>
<circle cx="247.5" cy="435.7" r="2.1" fill="#7a1818"/>
<circle cx="255.8" cy="437.1" r="2.1" fill="#7a1818"/>
<circle cx="264.0" cy="440.2" r="2.1" fill="#7a1818"/>
<circle cx="272.3" cy="442.5" r="2.1" fill="#7a1818"/>
<circle cx="280.6" cy="436.8" r="2.1" fill="#7a1818"/>
<circle cx="288.9" cy="444.1" r="2.1" fill="#7a1818"/>
<circle cx="297.1" cy="443.1" r="2.1" fill="#7a1818"/>
<circle cx="305.4" cy="443.1" r="2.1" fill="#7a1818"/>
<circle cx="313.7" cy="442.0" r="2.1" fill="#7a1818"/>
<circle cx="321.9" cy="435.0" r="2.1" fill="#7a1818"/>
<circle cx="330.2" cy="425.4" r="2.1" fill="#7a1818"/>
<circle cx="338.5" cy="450.5" r="2.1" fill="#7a1818"/>
<polyline points="82.1,437.7 90.4,441.5 98.6,439.8 106.9,443.8 115.2,442.8 123.4,440.7 131.7,429.9 140.0,420.9 148.3,429.4 156.5,424.5 164.8,434.4 173.1,434.8 181.3,434.4 189.6,437.7 197.9,439.8 206.1,440.2 214.4,446.1 222.7,443.1 231.0,439.0 239.2,439.8 247.5,440.7 255.8,436.8 264.0,440.2 272.3,439.0 280.6,439.8 288.9,440.2 297.1,437.2 305.4,439.8 313.7,436.2 321.9,450.1 330.2,441.7 338.5,438.5" fill="none" stroke="#cf48cf" stroke-width="1.7" stroke-linejoin="round"/>
<circle cx="82.1" cy="437.7" r="2.1" fill="#6a1a6a"/>
<circle cx="90.4" cy="441.5" r="2.1" fill="#6a1a6a"/>
<circle cx="98.6" cy="439.8" r="2.1" fill="#6a1a6a"/>
<circle cx="106.9" cy="443.8" r="2.1" fill="#6a1a6a"/>
<circle cx="115.2" cy="442.8" r="2.1" fill="#6a1a6a"/>
<circle cx="123.4" cy="440.7" r="2.1" fill="#6a1a6a"/>
<circle cx="131.7" cy="429.9" r="2.1" fill="#6a1a6a"/>
<circle cx="140.0" cy="420.9" r="2.1" fill="#6a1a6a"/>
<circle cx="148.3" cy="429.4" r="2.1" fill="#6a1a6a"/>
<circle cx="156.5" cy="424.5" r="2.1" fill="#6a1a6a"/>
<circle cx="164.8" cy="434.4" r="2.1" fill="#6a1a6a"/>
<circle cx="173.1" cy="434.8" r="2.1" fill="#6a1a6a"/>
<circle cx="181.3" cy="434.4" r="2.1" fill="#6a1a6a"/>
<circle cx="189.6" cy="437.7" r="2.1" fill="#6a1a6a"/>
<circle cx="197.9" cy="439.8" r="2.1" fill="#6a1a6a"/>
<circle cx="206.1" cy="440.2" r="2.1" fill="#6a1a6a"/>
<circle cx="214.4" cy="446.1" r="2.1" fill="#6a1a6a"/>
<circle cx="222.7" cy="443.1" r="2.1" fill="#6a1a6a"/>
<circle cx="231.0" cy="439.0" r="2.1" fill="#6a1a6a"/>
<circle cx="239.2" cy="439.8" r="2.1" fill="#6a1a6a"/>
<circle cx="247.5" cy="440.7" r="2.1" fill="#6a1a6a"/>
<circle cx="255.8" cy="436.8" r="2.1" fill="#6a1a6a"/>
<circle cx="264.0" cy="440.2" r="2.1" fill="#6a1a6a"/>
<circle cx="272.3" cy="439.0" r="2.1" fill="#6a1a6a"/>
<circle cx="280.6" cy="439.8" r="2.1" fill="#6a1a6a"/>
<circle cx="288.9" cy="440.2" r="2.1" fill="#6a1a6a"/>
<circle cx="297.1" cy="437.2" r="2.1" fill="#6a1a6a"/>
<circle cx="305.4" cy="439.8" r="2.1" fill="#6a1a6a"/>
<circle cx="313.7" cy="436.2" r="2.1" fill="#6a1a6a"/>
<circle cx="321.9" cy="450.1" r="2.1" fill="#6a1a6a"/>
<circle cx="330.2" cy="441.7" r="2.1" fill="#6a1a6a"/>
<circle cx="338.5" cy="438.5" r="2.1" fill="#6a1a6a"/>
<line x1="64.0" y1="480.5" x2="351.5" y2="480.5" stroke="#2e2e2e" stroke-width="1.3"/>
<rect x="86.5" y="517.7" width="37" height="4" fill="#000078" stroke="#000040" stroke-width="0.8"/>
<text x="105" y="535.7" font-family='"Liberation Sans", sans-serif' font-size="10" font-weight="bold" text-anchor="middle" fill="#222">2024</text>
<rect x="156.5" y="517.7" width="37" height="4" fill="#007000" stroke="#003a00" stroke-width="0.8"/>
<text x="175" y="535.7" font-family='"Liberation Sans", sans-serif' font-size="10" font-weight="bold" text-anchor="middle" fill="#222">2023</text>
<rect x="226.5" y="517.7" width="37" height="4" fill="#dd0000" stroke="#600000" stroke-width="0.8"/>
<text x="245" y="535.7" font-family='"Liberation Sans", sans-serif' font-size="10" font-weight="bold" text-anchor="middle" fill="#222">2022</text>
<rect x="296.9" y="517.7" width="37" height="4" fill="#e000e0" stroke="#600060" stroke-width="0.8"/>
<text x="315.4" y="535.7" font-family='"Liberation Sans", sans-serif' font-size="10" font-weight="bold" text-anchor="middle" fill="#222">2021</text>
<rect x="41.9" y="49.9" width="329" height="160" fill="none" stroke="#fff" stroke-width="1"/>
<rect x="40.1" y="48.4" width="332.6" height="163.5" fill="none" stroke="#000" stroke-width="2.6"/>
<rect x="390" y="101" width="496" height="218" fill="#f0f0f0"/>
<path d="M390.5 319 L390.5 101.5 L885.5 101.5 L885.5 319" fill="none" stroke="#9a9a9a" stroke-width="1"/>
<path d="M390 101.5 L886 101.5" stroke="#bdbdbd" stroke-width="1"/>
<rect x="391" y="102" width="494" height="20.5" fill="#ffffff"/>
<path d="M395.3 109.5 L395.3 114.3 L402.6 116 L402.6 110.2 Z" fill="#fff" stroke="#1a1a1a" stroke-width="1.1"/>
<path d="M394.8 107.2 L402.9 108.4 L402.9 110.9 L394.8 109.9 Z" fill="#127878"/>
<path d="M402.4 116 L405.6 114.2" stroke="#1a1a1a" stroke-width="1.1"/>
<text x="410" y="115.3" font-family='"Liberation Sans", sans-serif' font-size="9.6" fill="#1a1a1a">Locate Saved Line Graph</text>
<path d="M867 108 L875 116.5 M875 108 L867 116.5" stroke="#111" stroke-width="1"/>
<rect x="404" y="136" width="362.5" height="18.5" fill="#fff"/>
<path d="M404.5 154.5 L404.5 136.5 L766.5 136.5" fill="none" stroke="#6d6d6d" stroke-width="1"/>
<path d="M405.5 154 L405.5 137.5 L766.5 137.5" fill="none" stroke="#a0a0a0" stroke-width="1"/>
<text x="406.7" y="147.4" font-family='"Liberation Sans", sans-serif' font-size="10" textLength="51.2" lengthAdjust="spacingAndGlyphs" fill="#111">Inf Flow YOY</text>
<rect x="766.5" y="136" width="33" height="19.5" fill="#efefef"/>
<path d="M767 155 L799 155 L799 136.5" fill="none" stroke="#555" stroke-width="1.6"/>
<text x="782" y="149" font-family='"Liberation Sans", sans-serif' font-size="9" text-anchor="middle" fill="#222">...</text>
<text x="411" y="181.2" font-family='"Liberation Sans", sans-serif' font-size="10" textLength="64.5" lengthAdjust="spacingAndGlyphs" fill="#111">Locate graph for</text>
<rect x="486" y="168.5" width="20" height="16" fill="#fff"/>
<path d="M486.5 184.5 L486.5 168.8 L506 168.8" fill="none" stroke="#6d6d6d" stroke-width="1"/>
<path d="M487.5 184 L487.5 169.8 L506 169.8" fill="none" stroke="#a9a9a9" stroke-width="1"/>
<text x="489.2" y="180.5" font-family='"Liberation Sans", sans-serif' font-size="10" textLength="5" lengthAdjust="spacingAndGlyphs" fill="#111">3</text>
<rect x="507" y="169" width="117" height="15.5" fill="#fff"/>
<path d="M507.5 184.5 L507.5 169.5 L623.5 169.5" fill="none" stroke="#6d6d6d" stroke-width="1"/>
<path d="M508 184 L623.5 184 L623.5 169.5" fill="none" stroke="#e8e8e8" stroke-width="1"/>
<rect x="508.5" y="170.5" width="100.5" height="13" fill="#0078d7"/>
<rect x="508.5" y="170.5" width="100.5" height="13" fill="none" stroke="#a05a20" stroke-width="0.6" stroke-dasharray="1 1"/>
<text x="510" y="181" font-family='"Liberation Sans", sans-serif' font-size="10" textLength="28.6" lengthAdjust="spacingAndGlyphs" fill="#e0ecff">Months</text>
<rect x="609.5" y="170.5" width="13.5" height="13.5" fill="#efefef"/>
<path d="M609.5 184 L623 184 L623 170.5" fill="none" stroke="#707070" stroke-width="1"/>
<path d="M613.5 175.8 L619.5 175.8 L616.5 179 Z" fill="#000"/>
<rect x="417.3" y="200.3" width="9.8" height="9.8" fill="#fff"/>
<path d="M417.6 210.1 L417.6 200.6 L427.1 200.6" fill="none" stroke="#7a7a7a" stroke-width="1"/>
<path d="M417.8 209.8 L426.8 209.8 L426.8 200.8" fill="none" stroke="#e6e6e6" stroke-width="0.8"/>
<text x="432.2" y="208.2" font-family='"Liberation Sans", sans-serif' font-size="10" textLength="115.5" lengthAdjust="spacingAndGlyphs" fill="#111">Locate data backward in time</text>
<path d="M416 228.5 L411 228.5 L411 256.5 L627.5 256.5 L627.5 228.5 L500 228.5" fill="none" stroke="#b8b8b8" stroke-width="1"/>
<path d="M412 229.5 L412 255.5 M412 229.5 L416 229.5 M500 229.5 L626.5 229.5 L626.5 255.5" fill="none" stroke="#fff" stroke-width="0.8"/>
<text x="418.2" y="232.2" font-family='"Liberation Sans", sans-serif' font-size="11.9" font-weight="bold" fill="#8a0f0f">Order by Date</text>
<circle cx="452.2" cy="243.8" r="4.2" fill="#fff" stroke="#9a9a9a" stroke-width="0.9"/>
<circle cx="452.2" cy="243.8" r="1.6" fill="#111"/>
<text x="461.2" y="248" font-family='"Liberation Sans", sans-serif' font-size="10" textLength="42.3" lengthAdjust="spacingAndGlyphs" fill="#111">Ascending</text>
<circle cx="554.1" cy="243.8" r="4.2" fill="#fff" stroke="#9a9a9a" stroke-width="0.9"/>
<text x="563.9" y="248" font-family='"Liberation Sans", sans-serif' font-size="10" textLength="47.6" lengthAdjust="spacingAndGlyphs" fill="#111">Descending</text>
<path d="M653 169 L648.5 169 L648.5 250.5 L845 250.5 L845 169 L700 169" fill="none" stroke="#b8b8b8" stroke-width="1"/>
<text x="655.4" y="173.3" font-family='"Liberation Sans", sans-serif' font-size="11.3" font-weight="bold" fill="#8a0f0f">Options</text>
<rect x="680.5" y="186.8" width="9.8" height="9.8" fill="#fff"/>
<path d="M680.8 196.60000000000002 L680.8 187.10000000000002 L690.3 187.10000000000002" fill="none" stroke="#7a7a7a" stroke-width="1"/>
<path d="M681 196.4 L690 196.4 L690 187.3" fill="none" stroke="#e6e6e6" stroke-width="0.8"/>
<text x="695.7" y="195.3" font-family='"Liberation Sans", sans-serif' font-size="10" textLength="37.2" lengthAdjust="spacingAndGlyphs" fill="#111">Hide Title</text>
<rect x="680.5" y="206.8" width="9.8" height="9.8" fill="#fff"/>
<path d="M680.8 216.60000000000002 L680.8 207.10000000000002 L690.3 207.10000000000002" fill="none" stroke="#7a7a7a" stroke-width="1"/>
<path d="M681 216.4 L690 216.4 L690 207.3" fill="none" stroke="#e6e6e6" stroke-width="0.8"/>
<text x="695.7" y="215.3" font-family='"Liberation Sans", sans-serif' font-size="10" textLength="48" lengthAdjust="spacingAndGlyphs" fill="#111">Hide subtitle</text>
<rect x="680.5" y="226.4" width="9.8" height="9.8" fill="#fff"/>
<path d="M680.8 236.20000000000002 L680.8 226.70000000000002 L690.3 226.70000000000002" fill="none" stroke="#7a7a7a" stroke-width="1"/>
<path d="M681 236.0 L690 236.0 L690 226.9" fill="none" stroke="#e6e6e6" stroke-width="0.8"/>
<text x="695.7" y="234.9" font-family='"Liberation Sans", sans-serif' font-size="10" textLength="50.7" lengthAdjust="spacingAndGlyphs" fill="#111">Hide Legend</text>
<rect x="430.3" y="281" width="59.89999999999998" height="26.4" fill="#efefef"/>
<path d="M430.8 306.5 L430.8 281.5 L489.2 281.5" fill="none" stroke="#fff" stroke-width="1"/>
<path d="M430.3 306.6 L489.4 306.6 L489.4 281" fill="none" stroke="#6a6a6a" stroke-width="1.7"/>
<text x="460.25" y="297.2" font-family='"Liberation Sans", sans-serif' font-size="10" text-anchor="middle" textLength="12.8" lengthAdjust="spacingAndGlyphs" fill="#111">OK</text>
<rect x="634.8" y="281" width="65.80000000000007" height="26.4" fill="#efefef"/>
<path d="M635.3 306.5 L635.3 281.5 L699.6 281.5" fill="none" stroke="#fff" stroke-width="1"/>
<path d="M634.8 306.6 L699.8000000000001 306.6 L699.8000000000001 281" fill="none" stroke="#6a6a6a" stroke-width="1.7"/>
<text x="667.7" y="297.2" font-family='"Liberation Sans", sans-serif' font-size="10" text-anchor="middle" textLength="27.4" lengthAdjust="spacingAndGlyphs" fill="#111">Cancel</text>
<circle cx="803.7" cy="134.3" r="13.6" fill="#000" opacity="0.12"/>
<circle cx="803.7" cy="133.5" r="13.3" fill="#e3464b"/>
<path d="M804.9000000000001 140.5 L804.9000000000001 126.1 L799.9000000000001 130.9" fill="none" stroke="#fff" stroke-width="1.6" stroke-linejoin="miter"/>
<circle cx="569.9" cy="190.8" r="13.6" fill="#000" opacity="0.12"/>
<circle cx="569.9" cy="190" r="13.3" fill="#e3464b"/>
<text x="569.9" y="197.1" font-family='"Liberation Sans", sans-serif' font-size="19.5" text-anchor="middle" fill="#fff">2</text>
<circle cx="489" cy="280.7" r="13.6" fill="#000" opacity="0.12"/>
<circle cx="489" cy="279.9" r="13.3" fill="#e3464b"/>
<text x="489" y="287.0" font-family='"Liberation Sans", sans-serif' font-size="19.5" text-anchor="middle" fill="#fff">3</text>
</svg></body></html>
